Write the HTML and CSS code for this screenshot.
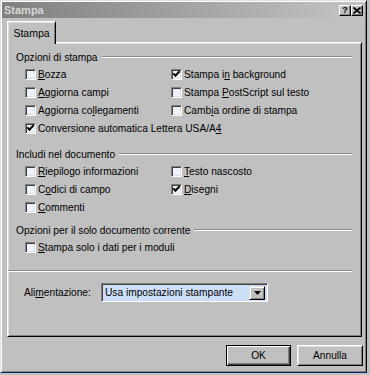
FILE: index.html
```html
<!DOCTYPE html>
<html lang="it">
<head>
<meta charset="utf-8" />
<title>Stampa</title>
<link rel="stylesheet" href="styles.css">
</head>
<body>
<div class="dlg">
	<!-- S barra titolo -->
	<div class="caption">
		<span class="caption_title">Stampa</span>
		<span class="caption_btns">
			<span class="cbtn">?</span><span class="cbtn">
				<svg width="8" height="7" viewBox="0 0 8 7"><path d="M0.5 0.5l7 6M7.5 0.5l-7 6" stroke="#000" stroke-width="1.6"/></svg>
			</span>
		</span>
	</div>
	<!-- E barra titolo -->
	<div class="tabs"><span class="tab">Stampa</span></div>
	<!-- S pannello -->
	<div class="panel">
		<div class="group_hd">Opzioni di stampa</div>
		<div class="grid">
			<div class="chk"><span class="box"></span><span><u>B</u>ozza</span></div>
			<div class="chk"><span class="box on"></span><span>Stampa i<u>n</u> background</span></div>
			<div class="chk"><span class="box"></span><span><u>A</u>ggiorna campi</span></div>
			<div class="chk"><span class="box"></span><span>Stampa <u>P</u>ostScript sul testo</span></div>
			<div class="chk"><span class="box"></span><span>Aggiorna co<u>l</u>legamenti</span></div>
			<div class="chk"><span class="box"></span><span>Camb<u>i</u>a ordine di stampa</span></div>
			<div class="chk wide"><span class="box on"></span><span>Conversione automatica Lettera USA/A<u>4</u></span></div>
		</div>

		<div class="group_hd g2">Includi nel documento</div>
		<div class="grid">
			<div class="chk"><span class="box"></span><span><u>R</u>iepilogo informazioni</span></div>
			<div class="chk"><span class="box"></span><span><u>T</u>esto nascosto</span></div>
			<div class="chk"><span class="box"></span><span>C<u>o</u>dici di campo</span></div>
			<div class="chk"><span class="box on"></span><span><u>D</u>isegni</span></div>
			<div class="chk"><span class="box"></span><span><u>C</u>ommenti</span></div>
		</div>

		<div class="group_hd g3">Opzioni per il solo documento corrente</div>
		<div class="grid">
			<div class="chk wide"><span class="box"></span><span><u>S</u>tampa solo i dati per i moduli</span></div>
		</div>

		<div class="sep"></div>

		<div class="feed">
			<span class="feed_lbl">Ali<u>m</u>entazione:</span>
			<span class="combo">
				<span class="combo_val">Usa impostazioni stampante</span>
				<span class="combo_bt"><svg width="7" height="4" viewBox="0 0 7 4"><path d="M0 0h7L3.5 4z" fill="#000"/></svg></span>
			</span>
		</div>
	</div>
	<!-- E pannello -->
	<div class="op">
		<span class="bt bt_def"><span>OK</span></span>
		<span class="bt">Annulla</span>
	</div>
</div>
</body>
</html>
```

FILE: styles.css
```css
body{margin:0;background:#c0c0c0;font-family:"Liberation Sans",Arial,sans-serif;font-size:10.2px;color:#000;}
u{text-decoration:underline;text-underline-offset:1px;}

.dlg{box-sizing:border-box;width:367px;height:373px;padding:1px 1px 1px 1px;border:1px solid;border-color:#dfdfdf #000 #0a246a #dfdfdf;box-shadow:inset 1px 1px #fff,inset -1px -1px #808080;background:#c0c0c0;}

/* S barra titolo */
.caption{display:flex;align-items:center;justify-content:space-between;height:16px;padding:0 2px 0 2px;background:linear-gradient(to right,#808080,#c4c4c4);}
.caption_title{font-size:11px;font-weight:bold;color:#d6d6d6;}
.caption_btns{display:flex;}
.cbtn{display:flex;align-items:center;justify-content:center;box-sizing:border-box;width:12px;height:11px;border:1px solid;border-color:#fff #000 #000 #fff;box-shadow:inset -1px -1px #808080;background:#c0c0c0;font-size:9px;font-weight:bold;line-height:1;}
/* E barra titolo */

.tabs{display:flex;margin-top:3px;padding-left:5px;}
.tab{position:relative;z-index:1;box-sizing:border-box;width:49px;height:23px;margin-bottom:-2px;padding-top:5px;border:1px solid;border-bottom:0 none;border-color:#fff #000 #000 #fff;box-shadow:inset 1px 1px #dfdfdf,inset -1px 0 #808080;background:#c0c0c0;text-align:center;font-size:10.5px;}

/* S pannello */
.panel{box-sizing:border-box;width:355px;height:295px;margin-left:5px;padding:7px 9px 0 8px;border:1px solid;border-color:#fff #000 #000 #fff;box-shadow:inset 1px 1px #dfdfdf,inset -1px -1px #808080;}
.group_hd{display:flex;align-items:center;height:14px;margin-bottom:1px;}
.group_hd:after{content:"";flex:1;margin-left:4px;border-top:1px solid #8a8a8a;border-bottom:1px solid #fff;}
.g2{margin-top:10px;}
.g3{margin-top:7px;}
.grid{display:grid;grid-template-columns:146px 1fr;padding-left:9px;}
.chk{display:flex;align-items:center;height:18px;white-space:nowrap;}
.chk.wide{grid-column:1 / 3;}
.box{display:flex;align-items:center;justify-content:center;box-sizing:border-box;width:11px;height:11px;margin-right:2px;border:1px solid;border-color:#808080 #fff #fff #808080;box-shadow:inset 1px 1px #404040,inset -1px -1px #dfdfdf;background:#eef3fb;}
.box.on:before{content:"";width:5px;height:2px;margin-top:-2px;border-left:2px solid #000;border-bottom:2px solid #000;transform:rotate(-45deg);}
.sep{height:0;margin:14px 0 0 -8px;border-top:1px solid #8a8a8a;border-bottom:1px solid #fff;}
.feed{display:flex;align-items:center;margin-top:11px;}
.feed_lbl{width:77px;padding-left:8px;}
.combo{display:flex;align-items:center;box-sizing:border-box;width:167px;height:19px;padding:2px;border:1px solid;border-color:#808080 #fff #fff #808080;box-shadow:inset 1px 1px #404040;background:#cddff7;}
.combo_val{flex:1;padding-left:1px;}
.combo_bt{display:flex;align-items:center;justify-content:center;box-sizing:border-box;width:16px;height:14px;border:1px solid;border-color:#dfdfdf #000 #000 #dfdfdf;box-shadow:inset 1px 1px #fff,inset -1px -1px #808080;background:#c0c0c0;}
/* E pannello */

/* S pulsanti */
.op{display:flex;justify-content:flex-end;gap:6px;margin-top:8px;padding-right:2px;}
.bt{display:flex;align-items:center;justify-content:center;box-sizing:border-box;width:66px;height:21px;border:1px solid;border-color:#fff #000 #000 #fff;box-shadow:inset 1px 1px #dfdfdf,inset -1px -1px #808080;}
.bt_def{width:65px;border-color:#000;box-shadow:inset 1px 1px #fff,inset -1px -1px #404040,inset -2px -2px #808080;}
/* E pulsanti */
```
